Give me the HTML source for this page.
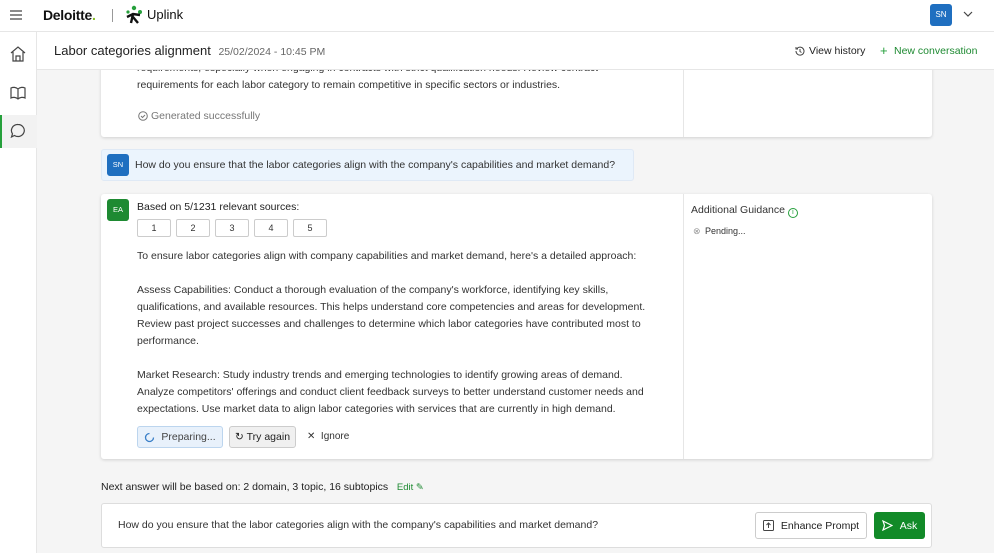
<!DOCTYPE html>
<html><head><meta charset="utf-8"><style>
*{box-sizing:border-box;margin:0;padding:0}
body{width:994px;height:553px;overflow:hidden;background:#f5f5f5;font-family:"Liberation Sans",sans-serif;color:#333;position:relative;font-size:10.5px}
.abs{position:absolute}
.top{left:0;top:0;width:994px;height:32px;background:#fff;border-bottom:1px solid #e6e6e6}
.side{left:0;top:32px;width:37px;height:521px;background:#fff;border-right:1px solid #e6e6e6}
.card{background:#fff;border-radius:3px;box-shadow:0 1px 3px rgba(0,0,0,.15)}
.txt{line-height:17px;font-size:10.5px;color:#333}
.src{display:inline-block;width:34px;height:18px;border:1px solid #ccc;border-radius:2px;text-align:center;line-height:16px;font-size:9px;margin-right:5px}
.btn{border-radius:3px;font-size:10.5px;display:flex;align-items:center;justify-content:center}
</style></head><body>
<div class="abs top"></div>
<svg class="abs" style="left:10px;top:10px" width="12" height="10"><path d="M0 1h12M0 5h12M0 9h12" stroke="#444" stroke-width="1.2"/></svg>
<div class="abs" style="left:43px;top:7px;font-size:14px;font-weight:bold;color:#111;letter-spacing:-.3px">Deloitte<span style="color:#86bc25">.</span></div>
<div class="abs" style="left:112px;top:9px;width:1px;height:13px;background:#999"></div>
<svg class="abs" style="left:124px;top:5px" width="20" height="20"><circle cx="10" cy="3" r="2.2" fill="#26a03c"/><circle cx="16" cy="7" r="2" fill="#26a03c"/><circle cx="4" cy="7" r="1.6" fill="#26a03c"/><path d="M3 12l6-3 7 1M9 9l-2 9M9 12l5 6" stroke="#111" stroke-width="2.4" fill="none"/></svg>
<div class="abs" style="left:147px;top:7px;font-size:13px;color:#111">Uplink</div>
<div class="abs" style="left:930px;top:4px;width:22px;height:22px;background:#1f6fc0;border-radius:3px;color:#fff;font-size:8px;line-height:22px;text-align:center">SN</div>
<svg class="abs" style="left:963px;top:11px" width="10" height="7"><path d="M1 1l4 4 4-4" stroke="#444" fill="none" stroke-width="1.2"/></svg>

<div class="abs side"></div>
<div class="abs" style="left:0;top:115px;width:37px;height:33px;background:#f2f2f2;border-left:2px solid #26a03c"></div>
<svg class="abs" style="left:10px;top:46px" width="16" height="16" fill="none" stroke="#444" stroke-width="1.2"><path d="M1 7L8 1l7 6M3 6v9h10V6M6 15v-5h4v5"/></svg>
<svg class="abs" style="left:10px;top:86px" width="16" height="14" fill="none" stroke="#444" stroke-width="1.2"><path d="M8 3C6 1 3 1 1 2v10c2-1 5-1 7 1 2-2 5-2 7-1V2c-2-1-5-1-7 1zM8 3v10"/></svg>
<svg class="abs" style="left:10px;top:123px" width="16" height="16" fill="none" stroke="#444" stroke-width="1.2"><path d="M8 1.5a6.3 6 0 1 1-3.5 11L1.5 14l1-3.2A6.3 6 0 0 1 8 1.5z"/></svg>

<div class="abs card" style="left:101px;top:60px;width:831px;height:77px;border-radius:0 0 3px 3px"></div>
<div class="abs" style="left:683px;top:70px;width:1px;height:67px;background:#e6e6e6"></div>
<div class="abs" style="left:37px;top:32px;width:957px;height:38px;background:#fff;border-bottom:1px solid #e6e6e6;z-index:1"></div>
<div class="abs" style="left:54px;top:43px;font-size:13px;color:#222;z-index:2">Labor categories alignment <span style="font-size:10.5px;color:#666;margin-left:4px">25/02/2024 - 10:45 PM</span></div>
<svg class="abs" style="left:795px;top:46px;z-index:2" width="10" height="10" fill="none" stroke="#444" stroke-width="1"><path d="M2 2.5A4 4 0 1 1 1 5M1 1v2h2M5 3v2.5l1.5 1"/></svg>
<div class="abs" style="left:809px;top:45px;font-size:10.5px;color:#222;z-index:2">View history</div>
<div class="abs" style="left:880px;top:43px;font-size:13px;color:#26a03c;z-index:2">+</div>
<div class="abs" style="left:894px;top:45px;font-size:10.5px;color:#1e8a32;z-index:2">New conversation</div>
<div class="abs txt" style="left:137px;top:60px;width:540px;overflow:hidden;height:41px">requirements, especially when engaging in contracts with strict qualification needs. Review contract<br>requirements for each labor category to remain competitive in specific sectors or industries.</div>
<svg class="abs" style="left:138px;top:111px" width="10" height="10" fill="none" stroke="#777"><circle cx="5" cy="5" r="4.3"/><path d="M3 5l1.5 1.5L7 4"/></svg>
<div class="abs" style="left:151px;top:110px;color:#777;font-size:10.5px">Generated successfully</div>

<div class="abs" style="left:101px;top:149px;width:533px;height:32px;background:#ebf4fd;border:1px solid #dfe9f5;border-radius:3px"></div>
<div class="abs" style="left:107px;top:154px;width:22px;height:22px;background:#1f6fc0;border-radius:3px;color:#fff;font-size:7.5px;line-height:22px;text-align:center">SN</div>
<div class="abs" style="left:135px;top:159px;font-size:10.5px;color:#333">How do you ensure that the labor categories align with the company's capabilities and market demand?</div>

<div class="abs card" style="left:101px;top:194px;width:831px;height:265px"></div>
<div class="abs" style="left:683px;top:194px;width:1px;height:265px;background:#e6e6e6"></div>
<div class="abs" style="left:107px;top:199px;width:22px;height:22px;background:#1e8a32;border-radius:3px;color:#fff;font-size:7.5px;line-height:22px;text-align:center">EA</div>
<div class="abs" style="left:137px;top:201px;font-size:10.5px;color:#222">Based on 5/1231 relevant sources:</div>
<div class="abs" style="left:137px;top:219px;white-space:nowrap"><span class="src">1</span><span class="src">2</span><span class="src">3</span><span class="src">4</span><span class="src">5</span></div>
<div class="abs txt" style="left:137px;top:248px;width:520px">To ensure labor categories align with company capabilities and market demand, here's a detailed approach:<br><br>Assess Capabilities: Conduct a thorough evaluation of the company's workforce, identifying key skills, qualifications, and available resources. This helps understand core competencies and areas for development. Review past project successes and challenges to determine which labor categories have contributed most to performance.<br><br>Market Research: Study industry trends and emerging technologies to identify growing areas of demand. Analyze competitors' offerings and conduct client feedback surveys to better understand customer needs and expectations. Use market data to align labor categories with services that are currently in high demand.</div>
<div class="abs btn" style="left:137px;top:426px;width:86px;height:22px;background:#e8f1fb;border:1px solid #bcd5ee;color:#444"><svg width="11" height="11" style="margin-right:6px" fill="none" stroke="#3a7fc8" stroke-width="1.3"><path d="M9.5 5.5A4 4 0 1 1 5.5 1.5"/></svg>Preparing...</div>
<div class="abs btn" style="left:229px;top:426px;width:67px;height:22px;background:#f0f0f0;border:1px solid #ccc;color:#222">↻&nbsp;Try again</div>
<div class="abs" style="left:307px;top:431px;font-size:10px;color:#333">✕&nbsp; Ignore</div>
<div class="abs" style="left:691px;top:204px;font-size:10.5px;color:#333">Additional Guidance <span style="display:inline-block;width:10px;height:10px;border:1.2px solid #26a03c;border-radius:50%;font-size:7px;line-height:8px;text-align:center;color:#26a03c;vertical-align:-1px">i</span></div>
<div class="abs" style="left:693px;top:226px;font-size:9px;color:#999">⊗</div>
<div class="abs" style="left:705px;top:226px;font-size:9px;color:#333">Pending...</div>

<div class="abs" style="left:101px;top:481px;font-size:10.5px;color:#222">Next answer will be based on: 2 domain, 3 topic, 16 subtopics &nbsp;&nbsp;<span style="color:#1e8a32;font-size:9.5px">Edit ✎</span></div>
<div class="abs" style="left:101px;top:503px;width:831px;height:45px;background:#fff;border:1px solid #ddd;border-radius:3px"></div>
<div class="abs" style="left:118px;top:519px;font-size:10.5px;color:#333">How do you ensure that the labor categories align with the company's capabilities and market demand?</div>
<div class="abs btn" style="left:755px;top:512px;width:112px;height:27px;background:#fff;border:1px solid #ccc;color:#222"><svg width="11" height="11" style="margin-right:7px" fill="none" stroke="#444"><rect x=".5" y=".5" width="10" height="10" rx="1"/><path d="M5.5 8V3M3.5 5l2-2 2 2"/></svg>Enhance Prompt</div>
<div class="abs btn" style="left:874px;top:512px;width:51px;height:27px;background:#128a28;color:#fff"><svg width="11" height="11" style="margin-right:7px" fill="none" stroke="#fff" stroke-width="1.2"><path d="M1 1l9 4.5L1 10l1.5-4.5z"/></svg>Ask</div>
</body></html>
